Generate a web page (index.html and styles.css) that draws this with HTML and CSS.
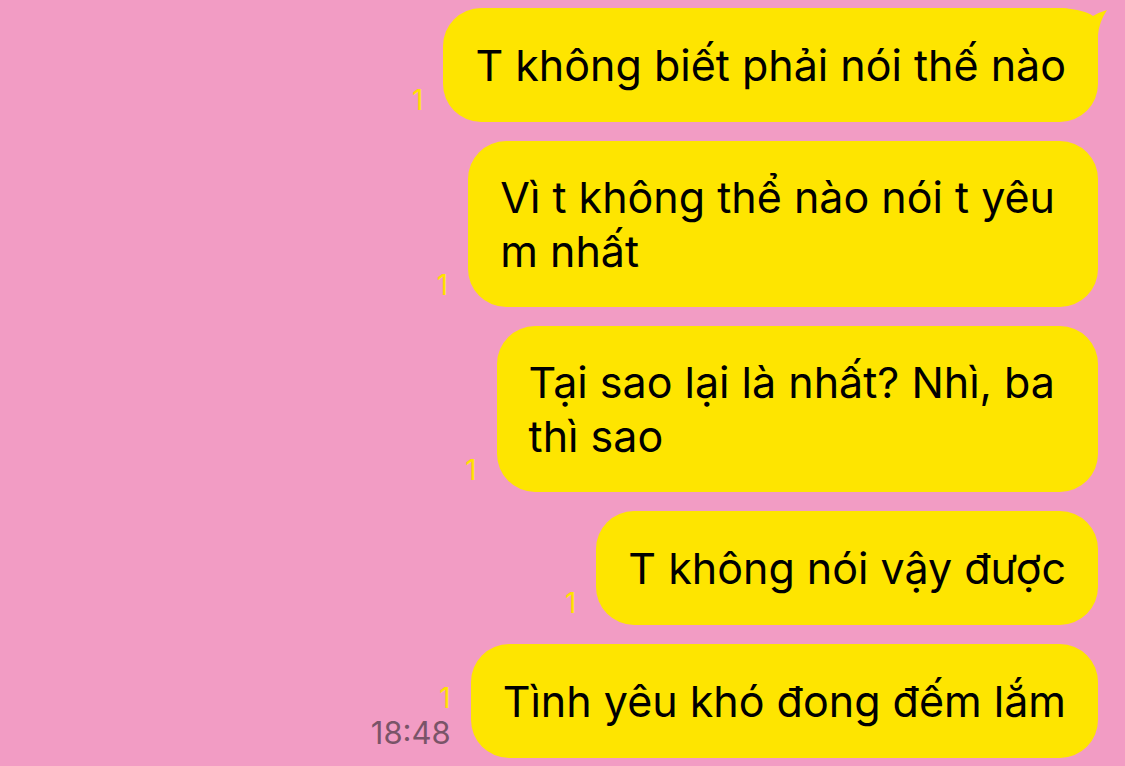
FILE: index.html
```html
<!doctype html>
<html lang="vi">
<head>
    <meta charset="UTF-8">
    <title>Chat</title>
    <link rel="stylesheet" href="styles.css">
</head>
<body>
<div class="chat">
    <div class="row">
        <div class="meta"><span class="unread">1</span></div>
        <div class="bubble tailed">
            <svg class="tail" width="60" height="52" viewBox="0 0 60 52"><path d="M0 0 L12 0 Q35 2 43 8 Q50 4 57 2 Q49 14 48 27 L48 52 L0 52 Z" fill="#fee500"/></svg>
            <span class="text">T không biết phải nói thế nào</span>
        </div>
    </div>
    <div class="row">
        <div class="meta"><span class="unread">1</span></div>
        <div class="bubble wrap"><span class="text">Vì t không thể nào nói t yêu<br>m nhất</span></div>
    </div>
    <div class="row">
        <div class="meta"><span class="unread">1</span></div>
        <div class="bubble wrap"><span class="text">Tại sao lại là nhất? Nhì, ba<br>thì sao</span></div>
    </div>
    <div class="row">
        <div class="meta"><span class="unread">1</span></div>
        <div class="bubble"><span class="text">T không nói vậy được</span></div>
    </div>
    <div class="row">
        <div class="meta"><span class="unread">1</span><span class="time">18:48</span></div>
        <div class="bubble"><span class="text">Tình yêu khó đong đếm lắm</span></div>
    </div>
</div>
</body>
</html>
```

FILE: styles.css
```css
html, body {
    margin: 0;
    background: #f29cc4;
}
body {
    font-family: Inter, "Noto Sans", sans-serif;
    width: 1125px;
    height: 766px;
    overflow: hidden;
}
.chat {
    display: flex;
    flex-direction: column;
    align-items: flex-end;
    gap: 19px;
    padding: 8px 27px 0 0;
}
.row {
    display: flex;
    align-items: flex-end;
    gap: 20px;
}
.meta {
    display: flex;
    flex-direction: column;
    align-items: flex-end;
    padding-bottom: 6px;
}
.unread {
    color: #ffe100;
    font-size: 28px;
    line-height: 32px;
}
.time {
    color: #7a5468;
    font-size: 31px;
    line-height: 38px;
}
.bubble {
    position: relative;
    background: #fee500;
    color: #000;
    font-size: 43px;
    line-height: 54px;
    padding: 30px 32px 30px 32px;
    border-radius: 38px;
    white-space: nowrap;
}
.bubble.wrap {
    padding: 29px 43px 29px 32px;
}
.text {
    position: relative;
}
.tail {
    position: absolute;
    top: 0;
    right: -12px;
}
```
